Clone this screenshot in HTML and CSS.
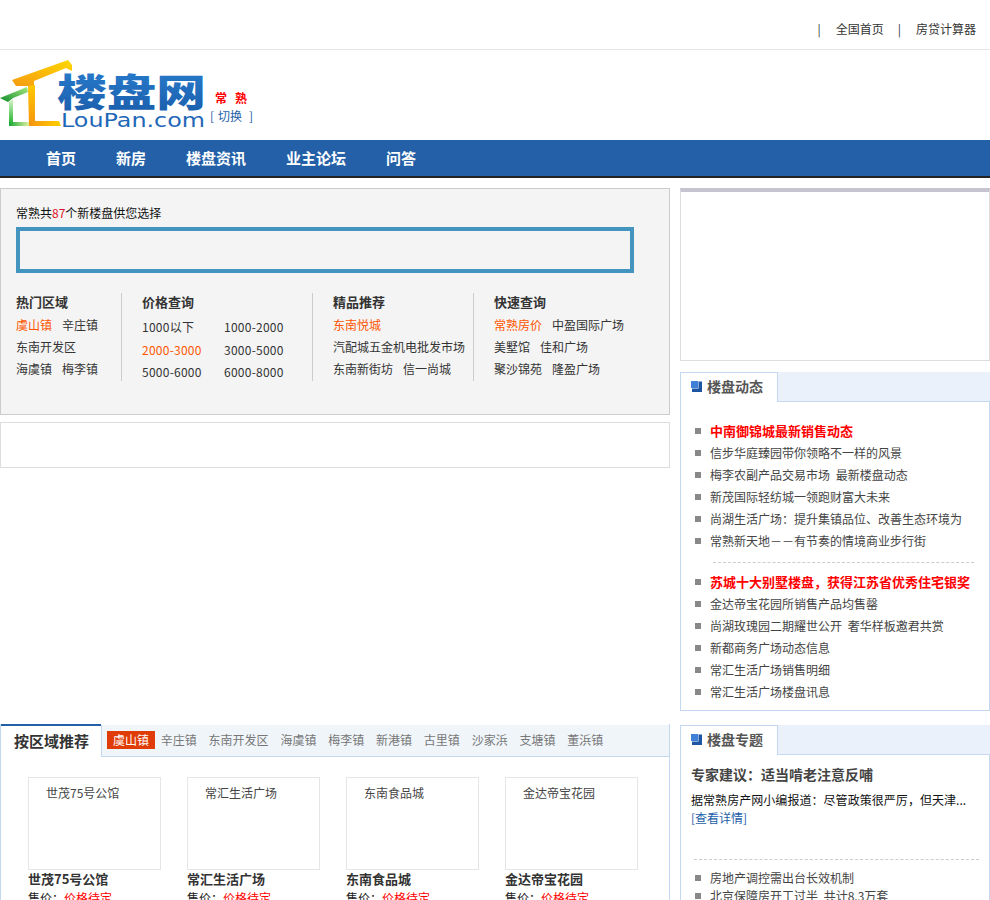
FILE: index.html
```html
<!DOCTYPE html>
<html lang="zh-CN">
<head>
<meta charset="utf-8">
<title>常熟楼盘网</title>
<link rel="stylesheet" href="styles.css">
</head>
<body>
<div class="topbar">
  <span class="sep">|</span><a>全国首页</a><span class="sep">|</span><a>房贷计算器</a>
</div>
<header class="brand">
  <svg class="logo" width="206" height="80" viewBox="0 0 206 80">
    <defs>
      <linearGradient id="roof" x1="0" y1="1" x2="1" y2="0"><stop offset="0" stop-color="#f59a12"/><stop offset="1" stop-color="#ffd800"/></linearGradient>
      <linearGradient id="wall" x1="0" y1="0" x2="0" y2="1"><stop offset="0" stop-color="#ffc800"/><stop offset="1" stop-color="#f59410"/></linearGradient>
      <linearGradient id="floor" x1="0" y1="0" x2="1" y2="0"><stop offset="0" stop-color="#f59410"/><stop offset="1" stop-color="#ffd000"/></linearGradient>
      <linearGradient id="gwall" x1="0" y1="0" x2="0" y2="1"><stop offset="0" stop-color="#d8f5c8"/><stop offset="1" stop-color="#30b838"/></linearGradient>
      <linearGradient id="groof" x1="0" y1="1" x2="1" y2="0"><stop offset="0" stop-color="#088a28"/><stop offset="1" stop-color="#a8e880"/></linearGradient>
      <linearGradient id="gfloor" x1="0" y1="0" x2="1" y2="0"><stop offset="0" stop-color="#18a838"/><stop offset="1" stop-color="#e0f0a0"/></linearGradient>
      <linearGradient id="blue" x1="0" y1="0" x2="0" y2="1"><stop offset="0" stop-color="#2a7fd0"/><stop offset="1" stop-color="#1a5caa"/></linearGradient>
    </defs>
    <path d="M0 43 L27 32 L28 37 L13 43 L8 47 Z" fill="url(#groof)"/>
    <path d="M9 47 L13 44 L13 67 L9 67 Z" fill="url(#gwall)"/>
    <path d="M9 67 L29 67 L29 71 L9 71 Z" fill="url(#gfloor)"/>
    <path d="M12 25 L68 5 L72 10 L72 16 L66 13 L34 26 L34 31 L16 31 Z" fill="url(#roof)"/>
    <path d="M28 31 L35 30 L35 67 L29 71 Z" fill="url(#wall)"/>
    <path d="M29 66 L59 66 L61 71 L29 71 Z" fill="url(#floor)"/>
    <text class="logo-cn" x="57" y="51" textLength="149" lengthAdjust="spacingAndGlyphs" fill="url(#blue)">楼盘网</text>
    <text class="logo-en" x="61" y="72" textLength="144" lengthAdjust="spacingAndGlyphs">LouPan.com</text>
  </svg>
  <div class="city">
    <div class="city-name"><span>常</span><span>熟</span></div>
    <div class="city-switch"><span>[</span><a>切换</a><span class="close">]</span></div>
  </div>
</header>
<nav class="nav">
  <a>首页</a><a>新房</a><a>楼盘资讯</a><a>业主论坛</a><a>问答</a>
</nav>
<main class="main">
  <div class="left">
    <section class="search">
      <p class="search-title">常熟共<em>87</em>个新楼盘供您选择</p>
      <div class="search-box"></div>
      <div class="query">
        <div class="qcol q1">
          <h3>热门区域</h3>
          <div class="qrow"><a class="hot">虞山镇</a><a>辛庄镇</a></div>
          <div class="qrow"><a>东南开发区</a></div>
          <div class="qrow"><a>海虞镇</a><a>梅李镇</a></div>
        </div>
        <div class="qcol q2">
          <h3>价格查询</h3>
          <div class="prices">
            <a>1000以下</a><a>1000-2000</a>
            <a class="hot">2000-3000</a><a>3000-5000</a>
            <a>5000-6000</a><a>6000-8000</a>
          </div>
        </div>
        <div class="qcol q3">
          <h3>精品推荐</h3>
          <div class="qrow"><a class="hot">东南悦城</a></div>
          <div class="qrow"><a>汽配城五金机电批发市场</a></div>
          <div class="qrow"><a>东南新街坊</a><a>信一尚城</a></div>
        </div>
        <div class="qcol q4">
          <h3>快速查询</h3>
          <div class="qrow"><a class="hot">常熟房价</a><a>中盈国际广场</a></div>
          <div class="qrow"><a>美墅馆</a><a>佳和广场</a></div>
          <div class="qrow"><a>聚沙锦苑</a><a>隆盈广场</a></div>
        </div>
      </div>
    </section>
    <div class="slot"></div>
    <section class="region">
      <div class="region-head">
        <h2>按区域推荐</h2>
        <div class="region-tabs">
          <a class="on">虞山镇</a><a>辛庄镇</a><a>东南开发区</a><a>海虞镇</a><a>梅李镇</a><a>新港镇</a><a>古里镇</a><a>沙家浜</a><a>支塘镇</a><a>董浜镇</a>
        </div>
      </div>
      <div class="cards">
        <article class="card"><div class="pic">世茂75号公馆</div><h4>世茂75号公馆</h4><p>售价：<em>价格待定</em></p></article>
        <article class="card"><div class="pic">常汇生活广场</div><h4>常汇生活广场</h4><p>售价：<em>价格待定</em></p></article>
        <article class="card"><div class="pic">东南食品城</div><h4>东南食品城</h4><p>售价：<em>价格待定</em></p></article>
        <article class="card"><div class="pic">金达帝宝花园</div><h4>金达帝宝花园</h4><p>售价：<em>价格待定</em></p></article>
      </div>
    </section>
  </div>
  <aside class="right">
    <div class="adbox"></div>
    <section class="panel news">
      <div class="panel-head"><h2><svg class="pico" width="11" height="11" viewBox="0 0 11 11"><rect width="7" height="7" fill="#3f7fd8"/><path d="M1 7.5h6.500V0.500H11V11H1Z" fill="#1d55a5"/></svg>楼盘动态</h2></div>
      <ul class="list first">
        <li class="strong"><a>中南御锦城最新销售动态</a></li>
        <li><a>信步华庭臻园带你领略不一样的风景</a></li>
        <li><a>梅李农副产品交易市场 最新楼盘动态</a></li>
        <li><a>新茂国际轻纺城一领跑财富大未来</a></li>
        <li><a>尚湖生活广场：提升集镇品位、改善生态环境为</a></li>
        <li><a>常熟新天地－－有节奏的情境商业步行街</a></li>
      </ul>
      <div class="dash d1"></div>
      <ul class="list">
        <li class="strong"><a>苏城十大别墅楼盘，获得江苏省优秀住宅银奖</a></li>
        <li><a>金达帝宝花园所销售产品均售罄</a></li>
        <li><a>尚湖玫瑰园二期耀世公开 奢华样板邀君共赏</a></li>
        <li><a>新都商务广场动态信息</a></li>
        <li><a>常汇生活广场销售明细</a></li>
        <li><a>常汇生活广场楼盘讯息</a></li>
      </ul>
    </section>
    <section class="panel topic">
      <div class="panel-head"><h2><svg class="pico" width="11" height="11" viewBox="0 0 11 11"><rect width="7" height="7" fill="#3f7fd8"/><path d="M1 7.500h6.500V0.500H11V11H1Z" fill="#1d55a5"/></svg>楼盘专题</h2></div>
      <h3>专家建议：适当啃老注意反哺</h3>
      <p class="topic-text">据常熟房产网小编报道：尽管政策很严厉，但天津...</p>
      <a class="more">[查看详情]</a>
      <div class="dash d2"></div>
      <ul class="list">
        <li><a>房地产调控需出台长效机制</a></li>
        <li><a>北京保障房开工过半 共计8.3万套</a></li>
      </ul>
    </section>
  </aside>
</main>
</body>
</html>
```

FILE: styles.css
```css
* { box-sizing: border-box; margin: 0; padding: 0; }
html, body { height: 900px; overflow: hidden; }
body {
  background: #fff;
  color: #333;
  font: 12px/18px "Noto Sans CJK SC", "Liberation Sans", sans-serif;
}
em { font-style: normal; }
ul { list-style: none; }

.topbar {
  height: 50px;
  border-bottom: 1px solid #e6e6e6;
  padding: 20px 14px 0 0;
  display: flex;
  justify-content: flex-end;
  color: #333;
}
.topbar .sep { margin: 0 15px 0 0; }
.topbar a + .sep { margin-left: 14px; }

.brand { height: 90px; display: flex; position: relative; }
.logo { margin-top: 5px; flex: none; }
.logo-cn { font: 900 38px "Noto Sans CJK SC", sans-serif; }
.logo-en { font: 20px "DejaVu Sans", sans-serif; fill: #1f68b8; }
.city { margin: 39px 0 0 4px; }
.city-name { display: flex; gap: 8px; padding-left: 5px; color: #f00; font-weight: 700; line-height: 18px; }
.city-switch { display: flex; gap: 4px; color: #2360a8; line-height: 18px; }
.city-switch .close { margin-left: 3px; }

.nav {
  height: 38px;
  background: #2360a8;
  border-bottom: 2px solid #222;
  padding-left: 46px;
  display: flex;
  gap: 40px;
  color: #fff;
  font-size: 15px;
  font-weight: 700;
  line-height: 36px;
}

.main { display: flex; gap: 10px; padding-top: 10px; }
.left { width: 670px; flex: none; }
.right { width: 310px; flex: none; }

.search {
  height: 227px;
  background: #f4f4f4;
  border: 1px solid #ccc;
  padding: 15px 0 0 15px;
}
.search-title { color: #111; }
.search-title em { color: #e0102a; }
.search-box { width: 618px; height: 46px; margin-top: 5px; border: 4px solid #4494c0; }
.query { display: flex; margin-top: 20px; height: 88px; }
.qcol { border-right: 1px solid #ccc; padding-left: 20px; }
.qcol h3 { height: 21px; font-size: 13px; line-height: 18px; font-weight: 700; color: #333; }
.q1 { width: 106px; padding-left: 0; }
.q2 { width: 191px; }
.q3 { width: 161px; }
.q4 { border-right: 0; }
.qrow { display: flex; gap: 10px; height: 22px; line-height: 22px; white-space: nowrap; }
.hot { color: #f50; }
.prices { display: grid; grid-template-columns: 82px 82px; grid-auto-rows: 22.500px; line-height: 26px; letter-spacing: .25px; }

.slot { height: 46px; margin-top: 7px; border: 1px solid #ddd; }

.region { margin-top: 256px; border-left: 1px solid #c4d8f2; border-right: 1px solid #c4d8f2; }
.region-head { display: flex; height: 33px; }
.region-head h2 {
  width: 100px;
  border-top: 2px solid #2360a8;
  font-size: 15px;
  line-height: 29px;
  padding-left: 13px;
  color: #333;
  font-weight: 700;
  white-space: nowrap;
}
.region-tabs {
  flex: 1;
  display: flex;
  align-items: flex-start;
  gap: 11.800px;
  padding: 6px 0 0 5px;
  margin-top: 1px;
  background: #f0f5fa;
  border: 1px solid #c4d8f2;
  border-width: 0 0 1px 1px;
  color: #777;
  line-height: 18px;
  white-space: nowrap;
}
.region-tabs .on { width: 48px; height: 18px; background: #e03c08; color: #fff; text-align: center; margin-right: -6px; }

.cards { display: flex; gap: 26px; padding: 20px 0 0 27px; }
.card { width: 133px; flex: none; }
.pic { height: 93px; border: 1px solid #e6e6e6; padding: 6px 0 0 17px; color: #444; }
.card h4 { font-size: 13px; line-height: 18px; font-weight: 700; color: #333; white-space: nowrap; }
.card p { color: #222; line-height: 20px; }
.card em { color: #f00; }

.adbox { height: 173px; border: 1px solid #ddd; border-top: 4px solid #c6c4d0; }

.panel { border: 1px solid #c4d8f2; border-top: 0; }
.panel-head {
  height: 30px;
  margin: 0 -1px;
  background: #eaf1fa;
  border-bottom: 1px solid #c4d8f2;
}
.panel-head h2 {
  display: flex;
  align-items: center;
  gap: 5px;
  width: 98px;
  height: 30px;
  padding: 0 0 4px 10px;
  background: #fff;
  border: 1px solid #c4d8f2;
  border-bottom: 0;
  font-size: 14px;
  font-weight: 700;
  color: #555;
}
.pico { flex: none; margin-top: 2px; }
.news { height: 339px; margin-top: 11px; }
.topic { margin-top: 14px; height: 300px; }

.list li {
  height: 22px;
  line-height: 22px;
  padding-left: 29px;
  color: #444;
  position: relative;
  white-space: nowrap;
  word-spacing: 3px;
}
.list li::before {
  content: "";
  position: absolute;
  left: 14px;
  top: 8px;
  width: 6px;
  height: 6px;
  background: #888;
}
.list.first { margin-top: 18px; }
.list .strong { color: #f00; font-weight: 700; font-size: 13px; }
.dash { border-top: 1px dashed #ccc; }
.d1 { margin: 10px 15px 8px 32px; }
.d2 { margin: 32px 10px 9px 13px; }
.topic h3 { margin: 9px 0 0 10px; font-size: 14px; font-weight: 700; color: #444; line-height: 20px; }
.topic-text { margin: 7px 0 0 10px; color: #111; white-space: nowrap; letter-spacing: .05px; }
.more { display: block; margin-left: 10px; color: #2360a8; }
.topic .list li { height: 18px; line-height: 18px; }
.topic .list li::before { top: 6px; }
```
